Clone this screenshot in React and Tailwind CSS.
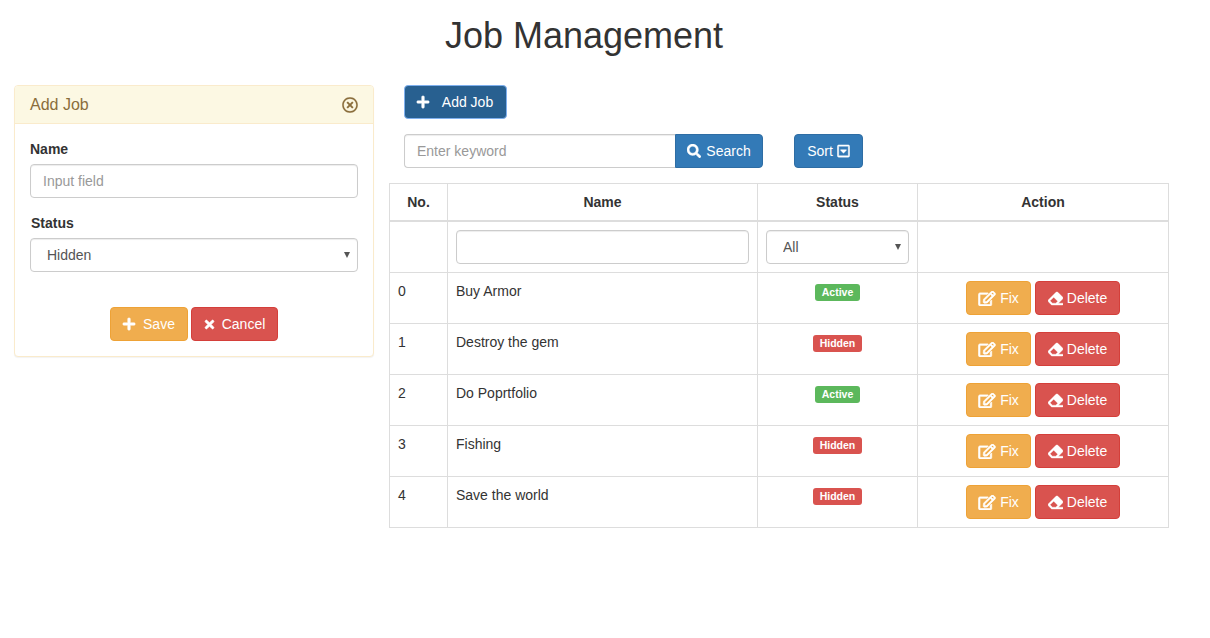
import React from "react";
import { FaPlus, FaTimes, FaRegEdit, FaEraser, FaSearch, FaRegCaretSquareDown, FaRegTimesCircle } from "react-icons/fa";

const rows = [
  ["0", "Buy Armor", true],
  ["1", "Destroy the gem", false],
  ["2", "Do Poprtfolio", true],
  ["3", "Fishing", false],
  ["4", "Save the world", false],
];

function Arrow() {
  return (
    <svg className="absolute right-[8px] top-[14px] pointer-events-none" width="6" height="6" viewBox="0 0 6 6">
      <path d="M0 0H6L3 6Z" fill="#555" />
    </svg>
  );
}

function Select({ value, width }) {
  return (
    <div className={`relative ${width}`}>
      <select
        defaultValue={value}
        className="appearance-none w-full h-[34px] pl-[16px] pr-[12px] bg-white text-[14px] text-[#555] border border-[#ccc] rounded-[4px] shadow-[inset_0_1px_1px_rgba(0,0,0,0.075)]"
      >
        <option>{value}</option>
      </select>
      <Arrow />
    </div>
  );
}

const btn = "inline-flex items-center justify-center h-[34px] border rounded-[4px] text-[14px] text-white whitespace-nowrap";
const warn = "bg-[#f0ad4e] border-[#eea236]";
const danger = "bg-[#d9534f] border-[#d43f3a]";
const primary = "bg-[#337ab7] border-[#2e6da4]";

export default function App() {
  return (
    <div className="w-[1210px] h-[638px] bg-white text-[14px] leading-[20px] text-[#333] font-['Liberation_Sans',Arial,sans-serif] overflow-hidden">
      <h1 className="w-[1168px] text-center text-[36px] leading-[40px] font-normal pt-[16px] h-[85px]">Job Management</h1>
      <div className="flex items-start pl-[14px] gap-[15px]">
        <div className="w-[360px] h-[272px] bg-white border border-[#faebcc] rounded-[4px] shadow-[0_1px_1px_rgba(0,0,0,0.05)]">
          <div className="flex items-center justify-between h-[38px] pl-[15px] pr-[15px] bg-[#fcf8e3] border-b border-[#faebcc] text-[#8a6d3b] text-[16px] rounded-t-[3px]">
            <span>Add Job</span>
            <FaRegTimesCircle className="w-[16px] h-[16px]" stroke="currentColor" strokeWidth="6" />
          </div>
          <div className="px-[15px] pt-[15px]">
            <label className="block font-bold h-[20px]">Name</label>
            <input
              placeholder="Input field"
              className="block mt-[5px] w-full h-[34px] px-[12px] border border-[#ccc] rounded-[4px] bg-white text-[#555] placeholder:text-[#999] shadow-[inset_0_1px_1px_rgba(0,0,0,0.075)] outline-none"
            />
            <label className="block font-bold h-[20px] mt-[15px] pl-[1px]">Status</label>
            <div className="mt-[5px]">
              <Select value="Hidden" width="w-full" />
            </div>
            <div className="flex justify-center gap-[3px] mt-[35px] pr-[1px]">
              <button className={`${btn} ${warn} w-[78px] gap-[7px]`}>
                <FaPlus className="w-[14px] h-[14px]" stroke="currentColor" strokeWidth="16" /> Save
              </button>
              <button className={`${btn} ${danger} w-[87px] gap-[6px]`}>
                <FaTimes className="w-[13px] h-[13px]" stroke="currentColor" strokeWidth="24" /> Cancel
              </button>
            </div>
          </div>
        </div>

        <div className="w-[779px]">
          <div className="pl-[15px]">
            <button className={`${btn} w-[103px] gap-[12px] pr-[2px] bg-[#286090] border-[#7fb0ee]`}>
              <FaPlus className="w-[14px] h-[14px]" stroke="currentColor" strokeWidth="16" /> Add Job
            </button>
            <div className="flex mt-[15px]">
              <input
                placeholder="Enter keyword"
                className="w-[271px] h-[34px] px-[12px] border border-[#ccc] border-r-0 rounded-l-[4px] bg-white text-[#555] placeholder:text-[#999] shadow-[inset_0_1px_1px_rgba(0,0,0,0.075)] outline-none"
              />
              <button className={`${btn} ${primary} w-[88px] gap-[5px] rounded-l-none`}>
                <FaSearch className="w-[14px] h-[14px]" stroke="currentColor" strokeWidth="16" /> Search
              </button>
              <button className={`${btn} ${primary} w-[69px] gap-[4px] ml-[31px]`}>
                Sort <FaRegCaretSquareDown className="w-[13px] h-[14px]" stroke="currentColor" strokeWidth="16" />
              </button>
            </div>
          </div>

          <table className="mt-[15px] w-[779px] table-fixed border-collapse border border-[#ddd]">
            <colgroup>
              <col className="w-[58px]" />
              <col className="w-[310px]" />
              <col className="w-[160px]" />
              <col className="w-[251px]" />
            </colgroup>
            <thead>
              <tr className="h-[37px]">
                {["No.", "Name", "Status", "Action"].map((h) => (
                  <th key={h} className="border border-[#ddd] border-b-2 font-bold text-center px-[8px] py-0">{h}</th>
                ))}
              </tr>
            </thead>
            <tbody>
              <tr className="h-[52px]">
                <td className="border border-[#ddd]"></td>
                <td className="border border-[#ddd] px-[8px] align-middle">
                  <input className="block w-full h-[34px] px-[12px] border border-[#ccc] rounded-[4px] bg-white shadow-[inset_0_1px_1px_rgba(0,0,0,0.075)] outline-none" />
                </td>
                <td className="border border-[#ddd] px-[8px] align-middle">
                  <Select value="All" width="w-full" />
                </td>
                <td className="border border-[#ddd]"></td>
              </tr>
              {rows.map(([n, name, active]) => (
                <tr key={n} className="h-[51px]">
                  <td className="border border-[#ddd] p-[8px] align-top">{n}</td>
                  <td className="border border-[#ddd] p-[8px] align-top">{name}</td>
                  <td className="border border-[#ddd] p-[8px] align-top text-center">
                    <span className={`inline-block mt-[3px] h-[17px] px-[7px] rounded-[3px] text-[10.5px] leading-[16px] font-bold align-top text-white ${active ? "bg-[#5cb85c]" : "bg-[#d9534f]"}`}>
                      {active ? "Active" : "Hidden"}
                    </span>
                  </td>
                  <td className="border border-[#ddd] p-[8px] align-top">
                    <div className="flex justify-center gap-[4px]">
                      <button className={`${btn} ${warn} w-[65px] gap-[4px]`}>
                        <FaRegEdit className="w-[18px] h-[15px]" stroke="currentColor" strokeWidth="24" /> Fix
                      </button>
                      <button className={`${btn} ${danger} w-[85px] gap-[4px]`}>
                        <FaEraser className="w-[15px] h-[15px]" stroke="currentColor" strokeWidth="12" /> Delete
                      </button>
                    </div>
                  </td>
                </tr>
              ))}
            </tbody>
          </table>
        </div>
      </div>
    </div>
  );
}
